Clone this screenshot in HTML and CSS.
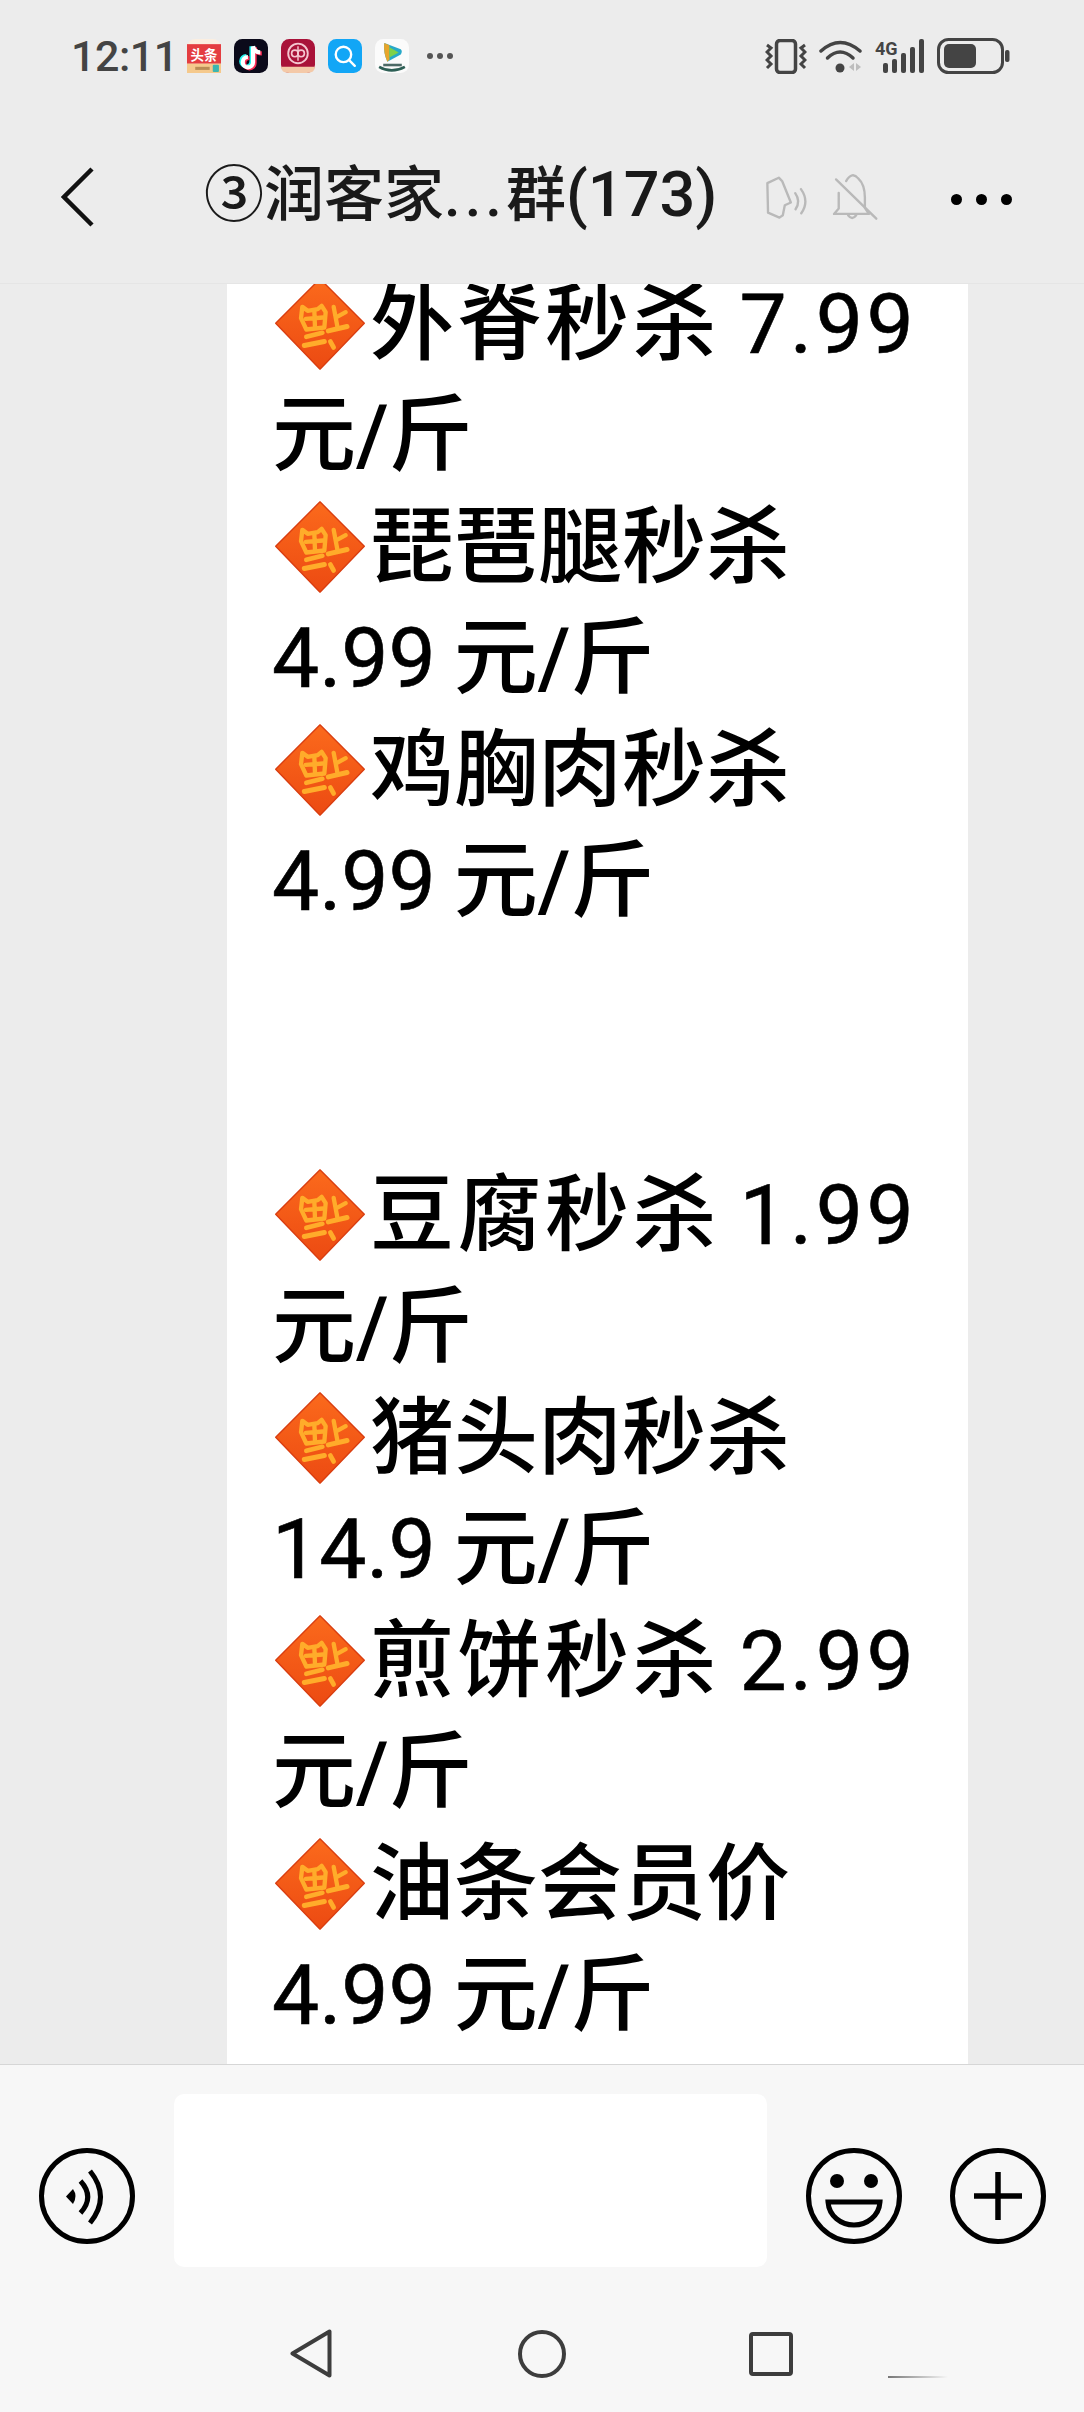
FILE: index.html
```html
<!DOCTYPE html>
<html lang="zh-CN">
<head>
<meta charset="utf-8">
<title>润客家群聊</title>
<link rel="stylesheet" href="styles.css">
</head>
<body>
<svg class="defs" aria-hidden="true">
  <defs>
    <linearGradient id="fuFill" x1="0" y1="0" x2="0" y2="1">
      <stop offset="0" stop-color="#fb6a1c"/>
      <stop offset="1" stop-color="#ec4a12"/>
    </linearGradient>
    <symbol id="fu" viewBox="30 20 270 275">
      <polygon points="165,22 298,155 165,293 32,155" fill="url(#fuFill)" stroke="#d93d10" stroke-width="4" stroke-linejoin="round"/>
      <g fill="none" stroke="#ffac2a" stroke-width="13" stroke-linecap="round" stroke-linejoin="round">
        <path d="M112 106 L128 118 L158 113 L170 103 L182 122 L178 168 L124 174 L108 140Z"/>
        <path d="M122 142 L174 138 M148 118 L150 168"/>
        <path d="M206 106 L218 170"/>
        <path d="M242 122 L216 136"/>
        <path d="M190 178 L246 165" stroke-width="15"/>
        <path d="M124 196 L172 184" stroke-width="14"/>
        <path d="M118 222 L178 210" stroke-width="15"/>
        <path d="M196 210 L206 228" stroke-width="14"/>
      </g>
    </symbol>
  </defs>
</svg>

<div class="page">
  <header class="top">
    <div class="status">
      <span class="time">12:11</span>
      <div class="apps">
        <svg class="app" viewBox="0 0 33 33"><rect width="33" height="33" rx="8" fill="#fbeee0"/><rect y="5" width="33" height="19" fill="#e43d40"/><rect y="24" width="33" height="9" fill="#f5c98c"/><rect x="25" y="25" width="6" height="7" rx="1" fill="#3cb6b0"/><rect x="8" y="27" width="14" height="3" fill="#b98d55"/><text x="16.5" y="20" class="app-label">头条</text></svg>
        <svg class="app" viewBox="0 0 33 33"><rect width="33" height="33" rx="8" fill="#0b0a1a"/><g fill="none" stroke-width="4"><path d="M17 7V21.5a5 5 0 1 1-5-5" stroke="#25f4ee"/><path d="M20 9V23.5a5 5 0 1 1-5-5" stroke="#fe2c55"/><path d="M20 8q1 6 7 6" stroke="#fe2c55"/><path d="M18.500 8V22.500a5 5 0 1 1-5-5" stroke="#fff"/><path d="M18.500 7q1 6 7 6" stroke="#fff"/></g></svg>
        <svg class="app" viewBox="0 0 33 33"><rect width="33" height="33" rx="8" fill="#a91239"/><path d="M0 27H33Q33 33 25 33H8Q0 33 0 27Z" fill="#f4c9a8"/><circle cx="16.500" cy="14" r="9.500" fill="none" stroke="#f5c6d0" stroke-width="1.800"/><circle cx="13.500" cy="14" r="3.200" fill="none" stroke="#f5c6d0" stroke-width="1.600"/><circle cx="19.500" cy="14" r="3.200" fill="none" stroke="#f5c6d0" stroke-width="1.600"/><path d="M16.500 7V21" stroke="#f5c6d0" stroke-width="1.400"/></svg>
        <svg class="app" viewBox="0 0 33 33"><rect width="33" height="33" rx="8" fill="#12a6f6"/><circle cx="15" cy="15" r="7.500" fill="none" stroke="#fff" stroke-width="2.300"/><path d="M20.500 20.500L26 26" stroke="#fff" stroke-width="2.300" stroke-linecap="round"/></svg>
        <svg class="app" viewBox="0 0 33 33"><rect width="33" height="33" rx="8" fill="#fbfbfb"/><path d="M9 4L25 10Q27 12 25 15L12 22Q8 14 9 4Z" fill="#27a9c9"/><path d="M9 4L14 6V20L12 22Q8 14 9 4Z" fill="#e7a52b"/><path d="M14 8L23 13L14 18Z" fill="#7fd14a"/><rect x="8" y="24" width="18" height="2.500" fill="#4c6a66"/><path d="M4 27Q16 34 29 27" fill="none" stroke="#2d5f55" stroke-width="2.500"/></svg>
      </div>
      <div class="more-dots"><i></i><i></i><i></i></div>
      <div class="indicators">
        <svg class="ind-vib" viewBox="0 0 42 35" fill="none" stroke="#444" stroke-width="3"><rect x="11.500" y="1.500" width="19" height="32" rx="3.500" stroke-width="3.500"/><path d="M2 6L6 9L2 13L6 17L2 21L6 25L2 29"/><path d="M40 6L36 9L40 13L36 17L40 21L36 25L40 29"/></svg>
        <svg class="ind-wifi" viewBox="0 0 44 36" fill="none" stroke="#444" stroke-width="3.500" stroke-linecap="round"><path d="M2 13Q21 -4 41 13"/><path d="M8.500 20Q21 8 34 20"/><circle cx="21" cy="30" r="4.500" fill="#444" stroke="none"/><path d="M35 25L30 29L35 33Z M37 25L42 29L37 33Z" fill="#bdbdbd" stroke="none"/></svg>
        <svg class="ind-sig" viewBox="0 0 50 36" fill="#444"><text x="0" y="17" class="sig-label">4G</text><rect x="8" y="25" width="5" height="10" rx="2"/><rect x="17" y="21" width="5" height="14" rx="2"/><rect x="26" y="15" width="5" height="20" rx="2"/><rect x="35" y="9" width="5" height="26" rx="2"/><rect x="44" y="1" width="5" height="34" rx="2"/></svg>
        <svg class="ind-bat" viewBox="0 0 73 36"><rect x="1.500" y="1.500" width="64" height="33" rx="10" fill="none" stroke="#444" stroke-width="3"/><rect x="7" y="6" width="32" height="24" rx="5" fill="#444"/><rect x="68" y="12" width="4.500" height="12" rx="2" fill="#444"/></svg>
      </div>
    </div>
    <nav class="titlebar">
      <svg class="back" viewBox="0 0 33 60" fill="none" stroke="#111" stroke-width="4.500"><path d="M31 2L3 30L31 58"/></svg>
      <h1 class="title">③润客家<span class="ell">...</span>群<span class="num">(173)</span></h1>
      <svg class="voice" viewBox="20 35 140 140" fill="none" stroke="#b9b9b9" stroke-width="7" stroke-linejoin="round" stroke-linecap="round"><path d="M30 62L64 46L74 56L100 120L82 128L76 158L66 165L32 150Z"/><path d="M113 92Q130 116 114 140"/><path d="M130 80Q156 116 131 152"/></svg>
      <svg class="bell" viewBox="220 30 140 155" fill="none" stroke="#b9b9b9" stroke-width="7" stroke-linejoin="round" stroke-linecap="round"><path d="M232 55L352 172"/><path d="M262 60Q280 30 298 52Q318 70 318 110V140L330 158H226L240 142V95"/><path d="M268 162Q280 178 292 162"/></svg>
      <div class="menu"><i></i><i></i><i></i></div>
    </nav>
  </header>

  <main class="chat">
    <div class="bubble">
      <div class="msg">
        <p class="item"><svg class="fu"><use href="#fu"/></svg><span class="wide">外脊秒杀 <span class="price">7.99</span></span> 元/斤</p>
        <p class="item"><svg class="fu"><use href="#fu"/></svg>琵琶腿秒杀 <span class="price">4.99</span> 元/斤</p>
        <p class="item"><svg class="fu"><use href="#fu"/></svg>鸡胸肉秒杀 <span class="price">4.99</span> 元/斤</p>
        <div class="blank"></div>
        <p class="item"><svg class="fu"><use href="#fu"/></svg><span class="wide">豆腐秒杀 <span class="price">1.99</span></span> 元/斤</p>
        <p class="item"><svg class="fu"><use href="#fu"/></svg>猪头肉秒杀 <span class="price">14.9</span> 元/斤</p>
        <p class="item"><svg class="fu"><use href="#fu"/></svg><span class="wide">煎饼秒杀 <span class="price">2.99</span></span> 元/斤</p>
        <p class="item"><svg class="fu"><use href="#fu"/></svg>油条会员价 <span class="price">4.99</span> 元/斤</p>
      </div>
    </div>
  </main>

  <footer class="bottom">
    <div class="composer">
      <svg class="round-btn" viewBox="0 0 96 96" fill="none" stroke="#000" stroke-width="5"><circle cx="48" cy="48" r="45.500"/><path d="M27 48.500L34 41Q39 48 34 56Z" fill="#000" stroke="none"/><path d="M41.500 33Q56 49 41.500 65"/><path d="M51 23Q72 49 51 75"/></svg>
      <div class="input"></div>
      <svg class="round-btn emoji-btn" viewBox="0 0 96 96" fill="none" stroke="#000" stroke-width="5"><circle cx="48" cy="48" r="45.500"/><circle cx="31" cy="33" r="7" fill="#000" stroke="none"/><circle cx="65" cy="33" r="7" fill="#000" stroke="none"/><path d="M22 54H74C73 68 61 77 48 77C35 77 23 68 22 54Z"/></svg>
      <svg class="round-btn plus-btn" viewBox="0 0 96 96" fill="none" stroke="#000" stroke-width="5"><circle cx="48" cy="48" r="45.500"/><path d="M24 48H72M48 24V72" stroke-width="5.500"/></svg>
    </div>
    <div class="navkeys">
      <svg class="key-back" viewBox="0 0 42 49" fill="none" stroke="#3d3d3d" stroke-width="4" stroke-linejoin="round"><path d="M2.500 24.500L39.500 2.500V46.500Z"/></svg>
      <div class="key-home"></div>
      <div class="key-recent"></div>
      <div class="gesture"></div>
    </div>
  </footer>
</div>
</body>
</html>
```

FILE: styles.css
```css
* {
  box-sizing: border-box;
}

html,
body {
  margin: 0;
  padding: 0;
}

body {
  width: 1084px;
  height: 2412px;
  overflow: hidden;
  background: #ececec;
  font-family: Roboto, "Noto Sans CJK SC", sans-serif;
}

.defs {
  position: absolute;
  width: 0;
  height: 0;
}

.page {
  display: flex;
  flex-direction: column;
  height: 2412px;
}

.top {
  flex: none;
  height: 284px;
  padding-top: 38px;
  background: #ececec;
  border-bottom: 1px solid #e5e5e5;
}

.status {
  display: flex;
  align-items: center;
  height: 36px;
  padding: 0 74px 0 71px;
}

.time {
  flex: none;
  width: 100px;
  font-size: 43px;
  line-height: 36px;
  letter-spacing: -0.5px;
  font-weight: 500;
  color: #444;
  white-space: nowrap;
}

.apps {
  display: flex;
  gap: 13px;
  margin-left: 16px;
}

.app {
  display: block;
  width: 34px;
  height: 34px;
}

.app-label {
  font-family: "Noto Sans CJK SC", sans-serif;
  font-size: 13px;
  font-weight: 700;
  fill: #fff;
  text-anchor: middle;
}

.more-dots {
  display: flex;
  gap: 4px;
  margin-left: 18px;
}

.more-dots i {
  display: block;
  width: 6px;
  height: 6px;
  border-radius: 50%;
  background: #555;
}

.indicators {
  display: flex;
  align-items: center;
  margin-left: auto;
}

.ind-vib {
  width: 42px;
  height: 35px;
}

.ind-wifi {
  width: 44px;
  height: 36px;
  margin-left: 12px;
}

.ind-sig {
  width: 50px;
  height: 36px;
  margin-left: 12px;
}

.sig-label {
  font-family: Roboto, sans-serif;
  font-size: 18px;
  font-weight: 700;
}

.ind-bat {
  width: 73px;
  height: 36px;
  margin-left: 12px;
}

.titlebar {
  display: flex;
  align-items: center;
  height: 80px;
  margin-top: 83px;
  padding: 0 72px 0 61px;
}

.back {
  flex: none;
  width: 33px;
  height: 60px;
}

.title {
  margin: 0 0 4px 110px;
  font-size: 60px;
  line-height: 80px;
  font-weight: 500;
  color: #1a1a1a;
  white-space: nowrap;
}

.ell {
  letter-spacing: 4px;
}

.num {
  font-size: 63px;
}

.voice {
  flex: none;
  width: 47px;
  height: 47px;
  margin-left: auto;
}

.bell {
  flex: none;
  width: 47px;
  height: 52px;
  margin-left: 21px;
}

.menu {
  display: flex;
  gap: 14px;
  margin-left: 72px;
  margin-top: 4px;
}

.menu i {
  display: block;
  width: 11px;
  height: 11px;
  border-radius: 50%;
  background: #000;
}

.chat {
  flex: 1;
  min-height: 0;
  padding-left: 227px;
  padding-right: 116px;
}

.bubble {
  height: 100%;
  overflow: hidden;
  background: #fff;
}

.msg {
  margin-top: -15px;
  padding: 0 30px 0 45px;
  font-size: 84px;
  line-height: 111.4px;
  font-weight: 500;
  color: #000;
  word-spacing: -3px;
}

.item {
  margin: 0;
}

.wide {
  letter-spacing: 3.5px;
  word-spacing: -5px;
}

.price {
  font-weight: 400;
  -webkit-text-stroke: 0.6px #000;
}

.blank {
  height: 222.8px;
}

.fu {
  display: inline-block;
  width: 90px;
  height: 92px;
  margin: 0 5px 0 3px;
  vertical-align: -17px;
}

.bottom {
  flex: none;
  height: 348px;
  background: #f7f7f7;
  border-top: 1px solid #d6d6d6;
}

.composer {
  display: flex;
  align-items: center;
  height: 173px;
  margin-top: 29px;
  padding-left: 39px;
}

.round-btn {
  flex: none;
  width: 96px;
  height: 96px;
  margin-top: 30px;
}

.input {
  flex: none;
  width: 593px;
  height: 173px;
  margin-left: 39px;
  border-radius: 10px;
  background: #fff;
}

.emoji-btn {
  margin-left: 39px;
}

.plus-btn {
  margin-left: 48px;
}

.navkeys {
  display: flex;
  align-items: center;
  height: 49px;
  margin-top: 62px;
  padding-left: 290px;
}

.key-back {
  flex: none;
  width: 42px;
  height: 49px;
}

.key-home {
  flex: none;
  width: 48px;
  height: 48px;
  margin-left: 186px;
  border: 4px solid #3d3d3d;
  border-radius: 50%;
}

.key-recent {
  flex: none;
  width: 44px;
  height: 44px;
  margin-left: 183px;
  border: 4px solid #3d3d3d;
  border-radius: 4px;
}

.gesture {
  align-self: flex-end;
  width: 60px;
  height: 2px;
  margin-left: 95px;
  background: linear-gradient(90deg, #777, #f7f7f7);
}
```
